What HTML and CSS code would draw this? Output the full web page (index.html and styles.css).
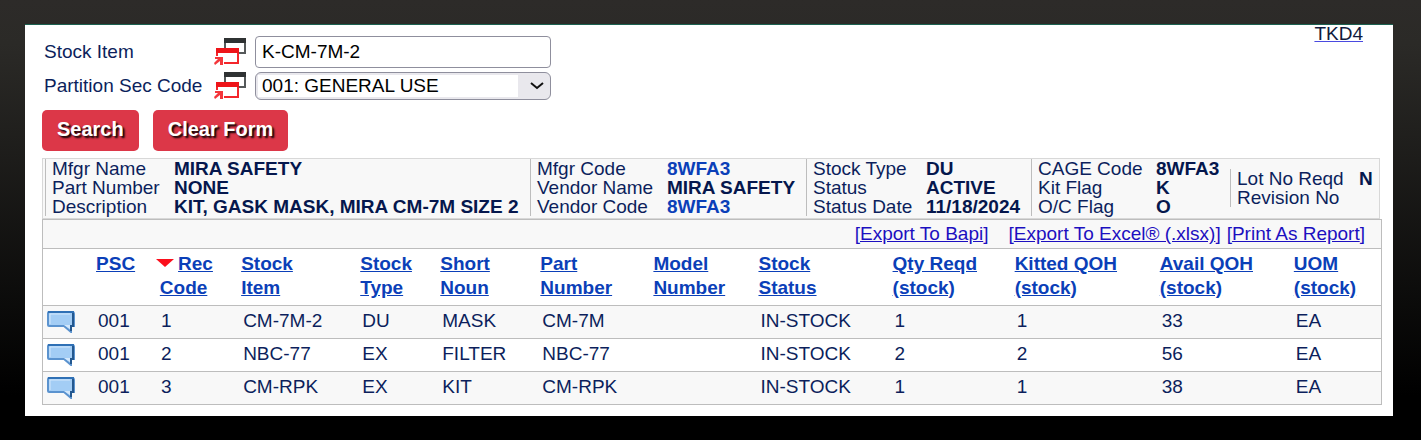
FILE: index.html
```html
<!DOCTYPE html>
<html lang="en">
<head>
    <meta charset="UTF-8">
    <meta name="viewport" content="width=device-width, initial-scale=1.0">
    <title>Stock Item Kit Search</title>
    <link rel="stylesheet" href="styles.css">
</head>
<body>
    <!-- Shared icons -->
    <svg class="icon-defs" aria-hidden="true">
        <symbol id="icon-lookup" viewBox="0 0 32 28">
            <path d="M10 0h22v16h-7v-2h5V5H12v5h-2z" fill="#55595a"/>
            <path d="M10 0h22v5H10z" fill="#2f3233"/>
            <path d="M2 10h23v16H10v-2h13v-9H4v3H2z" fill="#f4262b"/>
            <path d="M2 10h23v5H2z" fill="#ee1419"/>
            <path d="M1 19h8v8H6v-4l-5 4-1-2 4-4H1z" fill="#f4363b"/>
        </symbol>
        <symbol id="icon-note" viewBox="0 0 28 22">
            <path d="M2 1h23q2 0 2 2v12h-3v6l-7-6H2q-1 0-1-1V2q0-1 1-1z" fill="#a3cdf5" stroke="#5b93cf" stroke-width="2"/>
            <path d="M1 1h26" stroke="#2f70b5" stroke-width="2"/>
            <path d="M26 2v13h-2v5" fill="none" stroke="#24588f" stroke-width="2"/>
            <path d="M3 13V3h20" fill="none" stroke="#d3e8fc" stroke-width="1"/>
            <path d="M17 14h6v4z" fill="#d3e8fc"/>
        </symbol>
    </svg>

    <main class="panel">
        <a href="#" class="screen-link">TKD4</a>

        <!-- Search form -->
        <form class="search-form">
            <div class="form-row">
                <label for="stock-item">Stock Item</label>
                <button type="button" class="lookup-btn" aria-label="Look up stock item"><svg><use href="#icon-lookup"/></svg></button>
                <input type="text" id="stock-item" value="K-CM-7M-2">
            </div>
            <div class="form-row select-row">
                <label for="psc">Partition Sec Code</label>
                <button type="button" class="lookup-btn" aria-label="Look up partition sec code"><svg><use href="#icon-lookup"/></svg></button>
                <div class="select-box">
                    <select id="psc">
                        <option>001: GENERAL USE</option>
                    </select>
                    <svg class="chevron" viewBox="0 0 14 8"><path d="M1 1l6 5 6-5" fill="none" stroke="#111" stroke-width="2"/></svg>
                </div>
            </div>
            <div class="form-buttons">
                <button type="submit">Search</button>
                <button type="reset">Clear Form</button>
            </div>
        </form>

        <!-- Item summary -->
        <section class="summary">
            <dl class="part-info">
                <dt>Mfgr Name</dt><dd>MIRA SAFETY</dd>
                <dt>Part Number</dt><dd>NONE</dd>
                <dt>Description</dt><dd>KIT, GASK MASK, MIRA CM-7M SIZE 2</dd>
            </dl>
            <dl class="vendor-info">
                <dt>Mfgr Code</dt><dd><a href="#">8WFA3</a></dd>
                <dt>Vendor Name</dt><dd>MIRA SAFETY</dd>
                <dt>Vendor Code</dt><dd><a href="#">8WFA3</a></dd>
            </dl>
            <dl class="status-info">
                <dt>Stock Type</dt><dd>DU</dd>
                <dt>Status</dt><dd>ACTIVE</dd>
                <dt>Status Date</dt><dd>11/18/2024</dd>
            </dl>
            <dl class="flag-info">
                <dt>CAGE Code</dt><dd>8WFA3</dd>
                <dt>Kit Flag</dt><dd>K</dd>
                <dt>O/C Flag</dt><dd>O</dd>
            </dl>
            <dl class="lot-info">
                <dt>Lot No Reqd</dt><dd>N</dd>
                <dt>Revision No</dt><dd></dd>
            </dl>
        </section>

        <!-- Results -->
        <section class="results">
            <div class="export-bar">
                <span class="export-bapi">[<a href="#">Export To Bapi</a>]</span>
                <span>[<a href="#">Export To Excel® (.xlsx)</a>]</span>
                <span>[<a href="#">Print As Report</a>]</span>
            </div>
            <table>
                <colgroup>
                    <col class="col-note">
                    <col class="col-psc">
                    <col class="col-rec">
                    <col class="col-item">
                    <col class="col-type">
                    <col class="col-noun">
                    <col class="col-part">
                    <col class="col-model">
                    <col class="col-status">
                    <col class="col-qty">
                    <col class="col-kitted">
                    <col class="col-avail">
                    <col class="col-uom">
                </colgroup>
                <thead>
                    <tr>
                        <th></th>
                        <th><a href="#">PSC</a></th>
                        <th class="sorted"><span class="sort-arrow"></span><a href="#">Rec<br>Code</a></th>
                        <th><a href="#">Stock<br>Item</a></th>
                        <th><a href="#">Stock<br>Type</a></th>
                        <th><a href="#">Short<br>Noun</a></th>
                        <th><a href="#">Part<br>Number</a></th>
                        <th><a href="#">Model<br>Number</a></th>
                        <th><a href="#">Stock<br>Status</a></th>
                        <th><a href="#">Qty Reqd<br>(stock)</a></th>
                        <th><a href="#">Kitted QOH<br>(stock)</a></th>
                        <th><a href="#">Avail QOH<br>(stock)</a></th>
                        <th><a href="#">UOM<br>(stock)</a></th>
                    </tr>
                </thead>
                <tbody>
                    <tr>
                        <td><button type="button" class="note-btn" aria-label="Notes for record 1"><svg><use href="#icon-note"/></svg></button></td>
                        <td>001</td><td class="rec">1</td><td>CM-7M-2</td><td>DU</td><td>MASK</td><td>CM-7M</td><td></td><td>IN-STOCK</td><td>1</td><td>1</td><td>33</td><td>EA</td>
                    </tr>
                    <tr>
                        <td><button type="button" class="note-btn" aria-label="Notes for record 2"><svg><use href="#icon-note"/></svg></button></td>
                        <td>001</td><td class="rec">2</td><td>NBC-77</td><td>EX</td><td>FILTER</td><td>NBC-77</td><td></td><td>IN-STOCK</td><td>2</td><td>2</td><td>56</td><td>EA</td>
                    </tr>
                    <tr>
                        <td><button type="button" class="note-btn" aria-label="Notes for record 3"><svg><use href="#icon-note"/></svg></button></td>
                        <td>001</td><td class="rec">3</td><td>CM-RPK</td><td>EX</td><td>KIT</td><td>CM-RPK</td><td></td><td>IN-STOCK</td><td>1</td><td>1</td><td>38</td><td>EA</td>
                    </tr>
                </tbody>
            </table>
        </section>
    </main>
</body>
</html>
```
FILE: styles.css
```css
* {
    box-sizing: border-box;
}
html {
    min-height: 100%;
    background: linear-gradient(#2d2b29 0, #2b2a27 10%, #000 90%);
}
body {
    margin: 0;
    padding: 24px 28px 24px 25px;
    font-family: "Liberation Sans", Arial, sans-serif;
    font-size: 19px;
    color: #0c1f5c;
}
.icon-defs {
    display: none;
}
/* White page area */
.panel {
    position: relative;
    padding: 11px 11px 11px 17px;
    background-color: #fff;
    border-top: 1px solid #1c6150;
}
.screen-link {
    position: absolute;
    top: 0;
    right: 30px;
    line-height: 18px;
    color: #101a3c;
    text-decoration-color: #4a4ae0;
}
/* Search form */
.form-row {
    display: flex;
    align-items: center;
    height: 32px;
    margin-bottom: 4px;
}
.select-row {
    height: 28px;
}
.form-row label {
    width: 172px;
    padding-left: 2px;
    white-space: nowrap;
}
.lookup-btn {
    width: 32px;
    height: 28px;
    margin-right: 9px;
    padding: 0;
    border: none;
    background: none;
    cursor: pointer;
}
.lookup-btn svg {
    display: block;
    width: 32px;
    height: 28px;
}
.form-row input,
.form-row select {
    width: 296px;
    height: 100%;
    padding: 0 6px;
    border: 1px solid #8f8f9d;
    border-radius: 4px;
    font: inherit;
    color: #000;
}
.select-box {
    display: grid;
    height: 28px;
}
.form-row select {
    grid-area: 1 / 1;
    appearance: none;
    padding-bottom: 2px;
    border-radius: 6px;
    background: #e9e8ed linear-gradient(#fff, #fff) no-repeat 2px 2px / 260px 22px;
}
.chevron {
    grid-area: 1 / 1;
    align-self: center;
    justify-self: end;
    width: 14px;
    height: 8px;
    margin-right: 7px;
    pointer-events: none;
}
.form-buttons {
    display: flex;
    gap: 14px;
    margin: 10px 0 7px;
}
.form-buttons button {
    height: 41px;
    padding: 0 15px 2px;
    border: none;
    border-radius: 5px;
    background-color: #dc3748;
    font: bold 20px "Liberation Sans", Arial, sans-serif;
    color: #fff;
    text-shadow: 2px 2px 2px #000;
    cursor: pointer;
}
/* Item summary */
.summary {
    display: grid;
    grid-template-columns: 485fr 276fr 225fr 199fr 149fr;
    align-items: center;
    margin-right: 2px;
    padding: 0 0 2px 2px;
    border: 1px solid #d8d8d8;
    background-color: #f8f8f8;
    line-height: 19px;
    white-space: nowrap;
}
.summary dl {
    display: grid;
    grid-template-columns: 122px 1fr;
    margin: 0;
    padding-left: 6px;
    border-left: 1px solid #bdbdbd;
}
.summary .vendor-info {
    grid-template-columns: 130px 1fr;
}
.summary .status-info {
    grid-template-columns: 113px 1fr;
}
.summary .flag-info {
    grid-template-columns: 118px 1fr;
}
.summary dd {
    margin: 0;
    font-weight: bold;
    color: #05174d;
}
.summary a {
    color: #0b3fb8;
    text-decoration: none;
}
/* Results */
.results {
    border: 1px solid #bdbdbd;
}
.export-bar {
    display: flex;
    justify-content: flex-end;
    gap: 6px;
    padding-right: 16px;
    background-color: #f8f8f8;
    line-height: 28px;
    color: #1c0fc0;
}
.export-bar a {
    color: #1c0fc0;
}
.export-bapi {
    margin-right: 14px;
}
table {
    width: 100%;
    table-layout: fixed;
    border-spacing: 0;
}
.col-note { width: 52px; }
.col-psc { width: 61px; }
.col-rec { width: 84px; }
.col-item { width: 119px; }
.col-type { width: 80px; }
.col-noun { width: 100px; }
.col-part { width: 113px; }
.col-model { width: 105px; }
.col-status { width: 134px; }
.col-qty { width: 122px; }
.col-kitted { width: 145px; }
.col-avail { width: 134px; }
.col-uom { width: 88px; }
th,
td {
    border-top: 1px solid #bdbdbd;
    text-align: left;
    white-space: nowrap;
}
th {
    height: 57px;
    padding: 3px 0 4px 1px;
    line-height: 24px;
    vertical-align: top;
}
th a {
    color: #0b3fb8;
}
.sorted {
    padding-left: 0;
    padding-right: 29px;
    text-align: center;
}
.sort-arrow {
    display: inline-block;
    margin-right: 4px;
    border: 9px solid transparent;
    border-top: 8px solid #fb0f1c;
    border-bottom: 0;
    vertical-align: 3px;
}
td {
    height: 33px;
    padding: 0 0 2px 3px;
}
td:first-child {
    padding: 0 0 0 4px;
}
td.rec {
    padding-left: 5px;
}
tbody tr:nth-child(odd) {
    background-color: #f8f8f8;
}
.note-btn {
    display: block;
    padding: 0;
    border: none;
    background: none;
    cursor: pointer;
}
.note-btn svg {
    display: block;
    width: 28px;
    height: 22px;
}
```
